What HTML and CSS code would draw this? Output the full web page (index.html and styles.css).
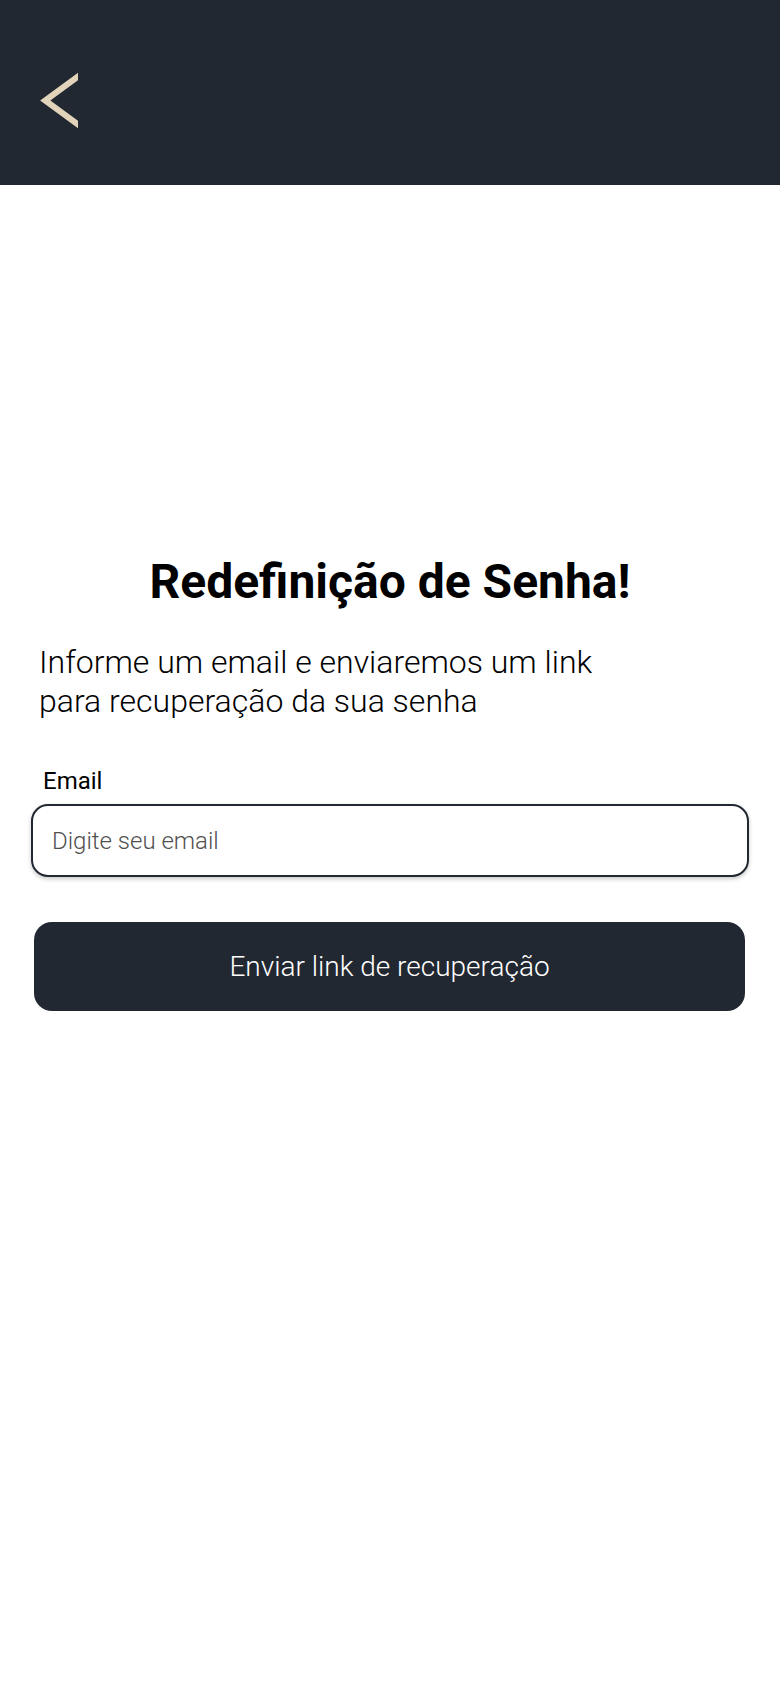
FILE: index.html
```html
<!DOCTYPE html>
<html lang="pt-BR">
<head>
<meta charset="utf-8">
<title>Redefinição de Senha</title>
<link rel="stylesheet" href="styles.css">
</head>
<body>
<header class="topbar">
  <button class="back" aria-label="Voltar">
    <svg width="38" height="58" viewBox="0 0 38 58">
      <polyline points="40,3.1 5.2,28.5 40,53.9" fill="none" stroke="#e2d4bb" stroke-width="6" stroke-linejoin="miter" stroke-miterlimit="10"/>
    </svg>
  </button>
</header>
<main class="content">
  <h1 class="title">Redefinição de Senha!</h1>
  <p class="subtitle">Informe um email e enviaremos um link<br>para recuperação da sua senha</p>
  <label class="label" for="email">Email</label>
  <input class="input" id="email" type="email" placeholder="Digite seu email">
  <button class="submit">Enviar link de recuperação</button>
</main>
</body>
</html>
```
FILE: styles.css
```css
* { box-sizing: border-box; }
html, body { margin: 0; padding: 0; background: #ffffff; }
body { font-family: Roboto, "Noto Sans", sans-serif; color: #000; }

.topbar {
  height: 185px;
  background: #222831;
  padding: 72px 0 0 40px;
}
.back {
  display: block;
  padding: 0;
  margin: 0;
  border: 0;
  background: none;
  width: 38px;
  height: 58px;
}
.back svg { display: block; }

.content {
  display: flex;
  flex-direction: column;
  padding: 370px 31px 0 31px;
}
.title {
  margin: 0;
  font-size: 48px;
  line-height: 54px;
  font-weight: 700;
  text-align: center;
  color: #000;
}
.subtitle {
  margin: 34px 0 0 0;
  padding-left: 8px;
  font-size: 32px;
  line-height: 38.5px;
  font-weight: 300;
  color: #000;
}
.label {
  margin-top: 48px;
  padding-left: 12px;
  font-size: 24px;
  line-height: 26px;
  font-weight: 400;
  color: #000;
}
.input {
  margin-top: 10px;
  height: 73px;
  width: 100%;
  border: 2px solid #222831;
  border-radius: 17px;
  padding: 0 19px;
  font-family: Roboto, "Noto Sans", sans-serif;
  font-size: 24px;
  font-weight: 300;
  color: #000;
  background: #fff;
  box-shadow: 0 2px 4px rgba(0, 0, 0, 0.22);
  outline: none;
}
.input::placeholder { color: #4f4f4f; opacity: 1; }
.submit {
  margin: 45px 4px 0 3px;
  height: 89px;
  border: 0;
  border-radius: 18px;
  background: #222831;
  color: #fff;
  font-family: Roboto, "Noto Sans", sans-serif;
  font-size: 28px;
  font-weight: 300;
  padding: 0;
}
```
